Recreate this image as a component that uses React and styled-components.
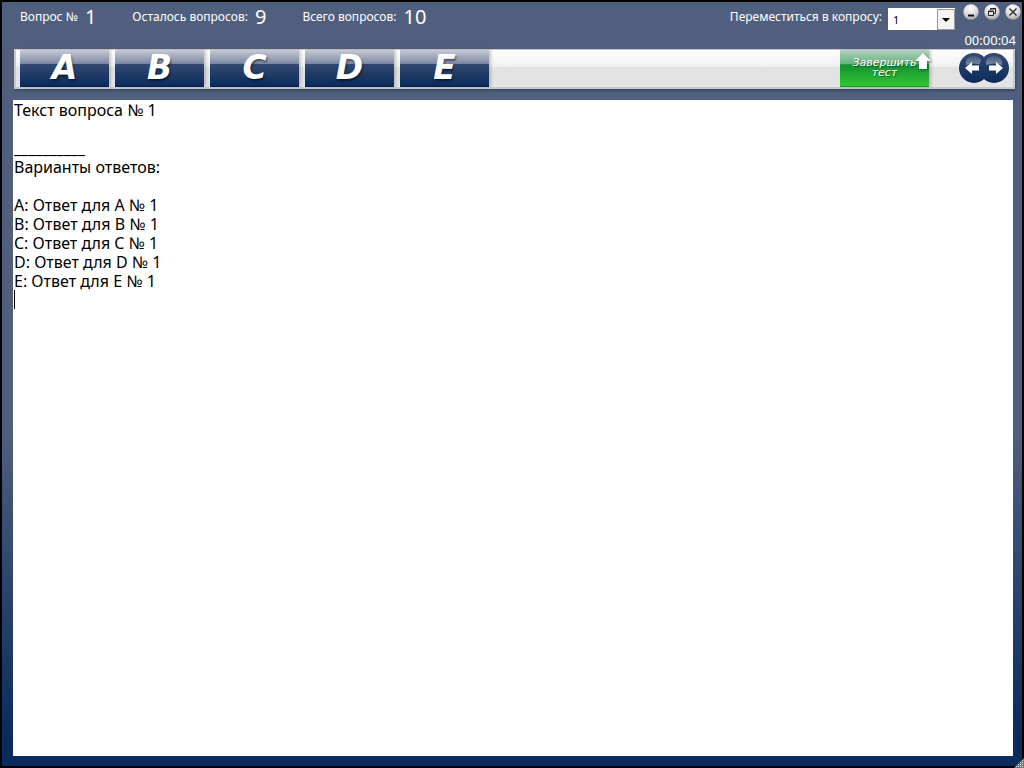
import React, { useState } from "react"
import styled, { createGlobalStyle } from "styled-components"

const GlobalStyle=createGlobalStyle`
*{
box-sizing:border-box;
}
body{
margin:0;
background:#000;
font-family:"Noto Sans","DejaVu Sans",sans-serif;
}
`

const Window=styled.main`
display:flex;
flex-direction:column;
min-height:100vh;
padding:0 9px 10px 11px;
border:2px solid #000;
background:linear-gradient(#505f7e 0%,#505f7e 56%,#0a2b5c 96%,#0a2b5c 100%);
position:relative;
`

const Header=styled.header`
display:flex;
justify-content:space-between;
height:47px;
color:#fff;
font-size:12px;
margin-right:-8px;
`

const Counters=styled.div`
display:flex;
gap:36px;
padding-left:7px;
height:30px;
`

const Counter=styled.div`
display:flex;
align-items:center;
gap:7px;
line-height:30px;
white-space:nowrap;
`

const Value=styled.span`
font-size:20px;
`

const Tools=styled.div`
display:flex;
align-items:flex-start;
gap:8px;
`

const JumpLabel=styled.label`
line-height:30px;
margin-right:-2px;
`

const SelectBox=styled.div`
position:relative;
width:67px;
height:22px;
margin-top:6px;
`

const Select=styled.select`
appearance:none;
width:100%;
height:100%;
padding:0 20px 0 4px;
border:1px solid #fff;
border-radius:0;
background:#fff;
color:#000;
font-family:inherit;
font-size:11px;
outline:none;
`

const SelectArrow=styled.span`
position:absolute;
top:1px;
right:0;
width:18px;
height:21px;
display:flex;
align-items:center;
justify-content:center;
border:1px solid #9a9a9a;
background:#f4f4f4;
pointer-events:none;
`

const Corner=styled.div`
display:flex;
flex-direction:column;
align-items:flex-end;
`

const WindowButtons=styled.div`
display:flex;
gap:5px;
padding-top:2px;
`

const IconButton=styled.button`
display:block;
padding:0;
border:0;
background:none;
line-height:0;
cursor:pointer;
`

const Timer=styled.time`
margin:12px 5px 0 0;
font-size:13px;
line-height:16px;
`

const Toolbar=styled.nav`
display:flex;
align-items:flex-start;
height:40px;
margin:0 -2px 11px 1px;
padding:0 4px;
border:solid #c9c9cb;
border-width:1px 2px 2px 2px;
background:linear-gradient(#fff 0%,#f0f0f0 45%,#e2e2e2 46%,#e4e4e4 100%);
box-shadow:1px 2px 2px rgba(20,30,60,.35);
`

const Answers=styled.div`
display:flex;
gap:6px;
`

const BarButton=styled.button`
width:89px;
height:37px;
padding:0;
border:0;
color:#fff;
font-family:"DejaVu Sans",sans-serif;
font-style:italic;
cursor:pointer;
box-shadow:2px 0 3px rgba(0,0,0,.2);
`

const AnswerButton=styled(BarButton)`
border-bottom:1px solid #061f45;
background:linear-gradient(#c5cad5 0%,#8590a8 34%,#7482a0 39%,#33486f 40%,#0a2b5c 100%);
font-size:33px;
font-weight:700;
line-height:36px;
text-shadow:1px 2px 2px rgba(0,0,0,.5);
`

const FinishButton=styled(BarButton)`
position:relative;
margin-left:auto;
border-bottom:1px solid #209322;
background:linear-gradient(#b3d0c0 0%,#66b47b 38%,#149033 41%,#30c631 100%);
font-size:11px;
line-height:10px;
text-shadow:1px 1px 1px rgba(0,0,0,.4);
`

const FinishArrow=styled.svg`
position:absolute;
top:2px;
right:-2px;
filter:drop-shadow(1px 1px 1px rgba(0,0,0,.4));
`

const Arrows=styled.div`
display:flex;
margin:3px 0 0 30px;

button + button{
margin-left:-10px;
}
`

const Question=styled.div`
position:relative;
display:flex;
flex:1;
background:#fff;
`

const QuestionText=styled.textarea`
flex:1;
padding:1px;
border:0;
outline:0;
resize:none;
background:#fff;
color:#000;
caret-color:transparent;
font-family:inherit;
font-size:16px;
line-height:19px;
`

const Caret=styled.span`
position:absolute;
left:1px;
width:1px;
height:19px;
background:#000;
`

const Grip=styled.svg`
position:absolute;
right:-2px;
bottom:-2px;
`

const letters=["A","B","C","D","E"]
const total=10
const lineHeight=19

const signs={
    minimize:<path d="M5 11.500h6" stroke="#111" strokeWidth="2"/>,
    restore:<path d="M6.500 6V4.500h5v5H10M4.500 7h5v4.500h-5zM4 7.500h6M6 5h6" fill="none" stroke="#222"/>,
    close:<path d="M4.500 4.500l7 7M11.500 4.500l-7 7" stroke="#333" strokeWidth="1.500"/>,
}

function WindowButton({kind,label}){
    return(
        <IconButton type="button" aria-label={label}>
            <svg width="16" height="16" viewBox="0 0 16 16">
                <defs>
                    <radialGradient id={`ball-${kind}`} cx="45%" cy="25%" r="75%">
                        <stop offset="0" stopColor="#fff"/>
                        <stop offset="0.6" stopColor="#dcdcdc"/>
                        <stop offset="1" stopColor="#a5a5a5"/>
                    </radialGradient>
                </defs>
                <circle cx="8" cy="8" r="7.700" fill={`url(#ball-${kind})`}/>
                {signs[kind]}
            </svg>
        </IconButton>
    )
}

function StepButton({back,label,onClick}){
    const id=back?"back":"next"
    return(
        <IconButton type="button" aria-label={label} onClick={onClick}>
            <svg width="30" height="30" viewBox="0 0 30 30">
                <defs>
                    <linearGradient id={`disc-${id}`} x1="0" y1="0" x2="0" y2="1">
                        <stop offset="0" stopColor="#354a73"/>
                        <stop offset="1" stopColor="#0a2a5a"/>
                    </linearGradient>
                    <linearGradient id={`shine-${id}`} x1="0" y1="0" x2="0" y2="1">
                        <stop offset="0" stopColor="#fff" stopOpacity="0.1"/>
                        <stop offset="1" stopColor="#fff" stopOpacity="0.4"/>
                    </linearGradient>
                </defs>
                <circle cx="15" cy="15" r="15" fill={`url(#disc-${id})`}/>
                <path d="M7 12C6 6 10 3 15 3s9 3 8 9q-8-3-16 0z" fill={`url(#shine-${id})`}/>
                {back
                    ?<path d="M6 15l7-6v3.500h7v5h-7V21z" fill="#fff"/>
                    :<path d="M24 15l-7-6v3.500h-7v5h7V21z" fill="#fff"/>}
            </svg>
        </IconButton>
    )
}

export default function App(){

    const [current,setCurrent]=useState(1);

    const lines=[
        `Текст вопроса № ${current}`,
        "",
        "__________",
        "Варианты ответов:",
        "",
        ...letters.map((letter)=>`${letter}: Ответ для ${letter} № ${current}`),
        "",
    ]

    return(
        <>
            <GlobalStyle/>
            <Window>
                <Header>
                    <Counters>
                        <Counter>Вопрос № <Value>{current}</Value></Counter>
                        <Counter>Осталось вопросов: <Value>{total-current}</Value></Counter>
                        <Counter>Всего вопросов: <Value>{total}</Value></Counter>
                    </Counters>
                    <Tools>
                        <JumpLabel htmlFor="jump">Переместиться в копросу:</JumpLabel>
                        <SelectBox>
                            <Select id="jump" value={current} onChange={(e)=>setCurrent(Number(e.target.value))}>
                                {Array.from({length:total},(_,i)=>(
                                    <option key={i} value={i+1}>{i+1}</option>
                                ))}
                            </Select>
                            <SelectArrow>
                                <svg width="8" height="4" viewBox="0 0 8 4"><path d="M0 0h8L4 4z"/></svg>
                            </SelectArrow>
                        </SelectBox>
                        <Corner>
                            <WindowButtons>
                                <WindowButton kind="minimize" label="Свернуть"/>
                                <WindowButton kind="restore" label="Восстановить"/>
                                <WindowButton kind="close" label="Закрыть"/>
                            </WindowButtons>
                            <Timer>00:00:04</Timer>
                        </Corner>
                    </Tools>
                </Header>
                <Toolbar>
                    <Answers>
                        {letters.map((letter)=>(
                            <AnswerButton key={letter} type="button">{letter}</AnswerButton>
                        ))}
                    </Answers>
                    <FinishButton type="button">
                        Завершить<br/>тест
                        <FinishArrow width="16" height="18" viewBox="0 0 16 18">
                            <path d="M8 1l8 8h-4v8H4V9H0z" fill="#fff"/>
                        </FinishArrow>
                    </FinishButton>
                    <Arrows>
                        <StepButton back label="Назад" onClick={()=>setCurrent(Math.max(1,current-1))}/>
                        <StepButton label="Вперёд" onClick={()=>setCurrent(Math.min(total,current+1))}/>
                    </Arrows>
                </Toolbar>
                <Question>
                    <QuestionText aria-label="Текст вопроса" readOnly value={lines.join("\n")}/>
                    <Caret style={{top:(lines.length-1)*lineHeight}}/>
                </Question>
                <Grip width="10" height="10" viewBox="0 0 10 10">
                    <defs>
                        <pattern id="dots" width="2" height="2" patternUnits="userSpaceOnUse">
                            <rect width="2" height="2" fill="#777"/>
                            <rect width="1" height="1" fill="#ddd"/>
                        </pattern>
                    </defs>
                    <path d="M10 0v10H0z" fill="url(#dots)"/>
                </Grip>
            </Window>
        </>
    )
}
